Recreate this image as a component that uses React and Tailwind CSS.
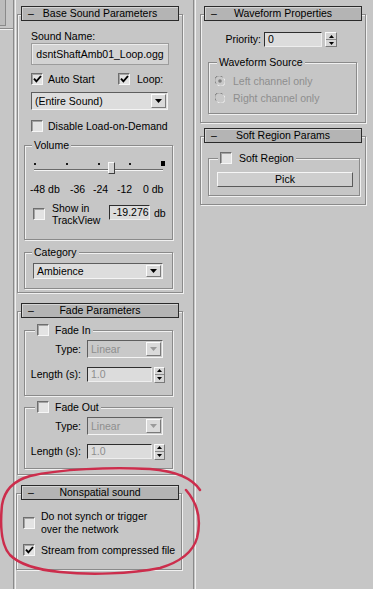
import React from "react";

const BG = "bg-[#c6c6c6]";

function Check({ checked = false, className = "" }) {
  return (
    <div
      className={`flex h-[12px] w-[12px] shrink-0 items-center justify-center border border-t-[#6e6e6e] border-l-[#6e6e6e] border-r-[#f6f6f6] border-b-[#f6f6f6] bg-[#e3e3e3] shadow-[inset_1px_1px_0_#a4a4a4] ${className}`}
    >
      {checked && (
        <svg width="9" height="8" viewBox="0 0 9 8">
          <path d="M1 3.6 L3.4 6.4 L8 1" fill="none" stroke="#000" strokeWidth="1.9" />
        </svg>
      )}
    </div>
  );
}

function Radio({ selected = false }) {
  return (
    <svg width="10" height="10" viewBox="0 0 10 10" className="shrink-0">
      <circle cx="5" cy="5" r="4.5" fill="#c9c9c9" />
      <path d="M1 7.5 A4.5 4.5 0 0 1 7.5 1" fill="none" stroke="#7c7c7c" strokeWidth="1" />
      <path d="M8.9 2.5 A4.5 4.5 0 0 1 2.5 8.9" fill="none" stroke="#f2f2f2" strokeWidth="1" />
      {selected && <circle cx="5" cy="5" r="1.8" fill="#7f7f7f" />}
    </svg>
  );
}

function DownTri({ color = "#000" }) {
  return (
    <svg width="7" height="4" viewBox="0 0 7 4">
      <path d="M0 0 H7 L3.5 4 Z" fill={color} />
    </svg>
  );
}

function Dropdown({ text, disabled = false, className = "" }) {
  return (
    <div
      className={`flex items-stretch border border-t-[#5e5e5e] border-l-[#5e5e5e] border-r-[#f4f4f4] border-b-[#f4f4f4] ${
        disabled ? "bg-[#c9c9c9] text-[#8e8e8e]" : "bg-[#dddddd]"
      } ${className}`}
    >
      <div className="flex flex-1 items-center pl-[3px]">{text}</div>
      <div className="my-[1px] mr-[1px] flex w-[15px] items-center justify-center border border-t-[#fbfbfb] border-l-[#fbfbfb] border-r-[#7a7a7a] border-b-[#7a7a7a] bg-[#dadada]">
        <DownTri color={disabled ? "#9a9a9a" : "#000"} />
      </div>
    </div>
  );
}

function SpinArrows({ className = "" }) {
  return (
    <div
      className={`flex flex-col border border-t-[#fafafa] border-l-[#fafafa] border-r-[#7a7a7a] border-b-[#7a7a7a] bg-[#d6d6d6] ${className}`}
    >
      <div className="flex flex-1 items-center justify-center border-b border-b-[#8a8a8a]">
        <svg width="5" height="3" viewBox="0 0 5 3">
          <path d="M0 3 H5 L2.5 0 Z" fill="#000" />
        </svg>
      </div>
      <div className="flex flex-1 items-center justify-center">
        <svg width="5" height="3" viewBox="0 0 5 3">
          <path d="M0 0 H5 L2.5 3 Z" fill="#000" />
        </svg>
      </div>
    </div>
  );
}

function Field({ value, disabled = false, className = "" }) {
  return (
    <div
      className={`flex items-center border border-t-[#2e2e2e] border-l-[#2e2e2e] border-r-[#eeeeee] border-b-[#eeeeee] bg-[#dcdcdc] pl-[3px] ${
        disabled ? "text-[#8e8e8e]" : "text-black"
      } ${className}`}
    >
      {value}
    </div>
  );
}

function GroupBox({ label, labelClass = "left-[7px]", className = "", children }) {
  return (
    <div
      className={`relative border border-[#8a8a8a] shadow-[inset_1px_1px_0_#f0f0f0,1px_1px_0_#f0f0f0] ${className}`}
    >
      <div className={`absolute -top-[7px] flex h-[12px] items-center px-[2px] ${BG} ${labelClass}`}>
        {label}
      </div>
      {children}
    </div>
  );
}

function Rollout({ title, className = "", headerClass = "", frameClass = "", children }) {
  return (
    <div className={className}>
      <div
        className={`relative z-10 grid h-[15px] w-[158px] grid-cols-[20px_1fr_20px] items-center border border-[#2a2a2a] bg-[#b4b4b4] shadow-[inset_1px_1px_0_#d4d4d4] ${headerClass}`}
      >
        <span className="pl-[6px]">–</span>
        <span className="text-center">{title}</span>
        <span />
      </div>
      <div
        className={`relative -mt-[7px] w-[166px] border border-[#8a8a8a] shadow-[inset_1px_1px_0_#f0f0f0,1px_1px_0_#f0f0f0] ${frameClass}`}
      >
        {children}
      </div>
    </div>
  );
}

function VLine() {
  return <div className="h-full w-[3px] shrink-0 border-l border-r border-l-[#8a8a8a] border-r-[#f0f0f0]" />;
}

function LeftColumn() {
  return (
    <div className="flex w-[177px] shrink-0 flex-col pt-[6px]">
      {/* Base Sound Parameters */}
      <Rollout title="Base Sound Parameters" headerClass="ml-[5px]" frameClass="ml-[1px] h-[279px]">
        <div className="ml-[13px] mt-[15px] flex h-[12px] items-center">Sound Name:</div>
        <div className="ml-[13px] mt-[1px] flex h-[22px] w-[138px] items-center justify-center border border-[#9c9c9c] bg-[#d3d3d3] shadow-[inset_1px_1px_0_#ececec]">
          dsntShaftAmb01_Loop.ogg
        </div>
        <div className="ml-[13px] mt-[8px] flex h-[12px] items-center">
          <div className="flex w-[87px] items-center">
            <Check checked />
            <span className="ml-[5px]">Auto Start</span>
          </div>
          <Check checked />
          <span className="ml-[7px]">Loop:</span>
        </div>
        <Dropdown text="(Entire Sound)" className="ml-[13px] mt-[7px] h-[18px] w-[137px]" />
        <div className="ml-[13px] mt-[10px] flex h-[12px] items-center">
          <Check />
          <span className="ml-[5px]">Disable Load-on-Demand</span>
        </div>
        <GroupBox label="Volume" labelClass="left-[7px]" className="ml-[6px] mt-[13px] h-[95px] w-[149px]">
          <div className="relative ml-[9px] mt-[15px] h-[13px] w-[131px]">
            <div className="flex h-[5px] items-center justify-between">
              <div className="h-[2px] w-[2px] bg-[#1a1a1a]" />
              <div className="h-[2px] w-[2px] bg-[#1a1a1a]" />
              <div className="h-[2px] w-[2px] bg-[#1a1a1a]" />
              <div className="h-[2px] w-[2px] bg-[#1a1a1a]" />
              <div className="h-[5px] w-[4px] bg-[#000]" />
            </div>
            <div className="mr-[2px] mt-[3px] h-[2px] border-t border-b border-t-[#6a6a6a] border-b-[#f4f4f4]" />
            <div className="absolute left-[74px] top-[1px] h-[12px] w-[7px] border border-t-[#fafafa] border-l-[#fafafa] border-r-[#404040] border-b-[#404040] bg-[#d2d2d2]" />
          </div>
          <div className="ml-[5px] mt-[9px] grid h-[12px] grid-cols-[40px_23px_24px_26px_1fr] items-center">
            <span>-48 db</span>
            <span>-36</span>
            <span>-24</span>
            <span>-12</span>
            <span>0 db</span>
          </div>
          <div className="ml-[8px] mt-[7px] flex h-[24px] items-center">
            <Check />
            <div className="ml-[7px] w-[57px] leading-[12px]">
              <div>Show in</div>
              <div>TrackView</div>
            </div>
            <Field value="-19.276" className="h-[15px] w-[41px] self-start mt-[3px]" />
            <span className="ml-[4px] self-start mt-[6px]">db</span>
          </div>
        </GroupBox>
        <GroupBox label="Category" labelClass="left-[7px]" className="ml-[6px] mt-[12px] h-[37px] w-[149px]">
          <Dropdown text="Ambience" className="ml-[8px] mt-[10px] h-[16px] w-[130px]" />
        </GroupBox>
      </Rollout>

      {/* Fade Parameters */}
      <Rollout title="Fade Parameters" className="mt-[10px]" headerClass="ml-[5px]" frameClass="ml-[1px] h-[164px]">
        <GroupBox
          label={
            <>
              <Check />
              <span className="ml-[6px]">Fade In</span>
            </>
          }
          labelClass="left-[10px]"
          className="ml-[6px] mt-[18px] h-[66px] w-[149px]"
        >
          <div className="mt-[9px] flex h-[18px] items-center">
            <span className="w-[56px] text-right">Type:</span>
            <Dropdown text="Linear" disabled className="ml-[6px] h-[18px] w-[76px]" />
          </div>
          <div className="mt-[9px] flex h-[15px] items-center">
            <span className="w-[56px] text-right">Length (s):</span>
            <Field value="1.0" disabled className="ml-[6px] h-[15px] w-[65px]" />
            <SpinArrows className="ml-[2px] h-[16px] w-[11px]" />
          </div>
        </GroupBox>
        <GroupBox
          label={
            <>
              <Check />
              <span className="ml-[6px]">Fade Out</span>
            </>
          }
          labelClass="left-[10px]"
          className="ml-[6px] mt-[11px] h-[62px] w-[149px]"
        >
          <div className="mt-[9px] flex h-[18px] items-center">
            <span className="w-[56px] text-right">Type:</span>
            <Dropdown text="Linear" disabled className="ml-[6px] h-[18px] w-[76px]" />
          </div>
          <div className="mt-[9px] flex h-[15px] items-center">
            <span className="w-[56px] text-right">Length (s):</span>
            <Field value="1.0" disabled className="ml-[6px] h-[15px] w-[65px]" />
            <SpinArrows className="ml-[2px] h-[16px] w-[11px]" />
          </div>
        </GroupBox>
      </Rollout>

      {/* Nonspatial sound */}
      <Rollout title="Nonspatial sound" className="mt-[10px]" headerClass="ml-[5px]" frameClass="h-[77px]">
        <div className="ml-[6px] mt-[16px] flex h-[26px] items-center">
          <Check />
          <div className="ml-[6px] leading-[13px]">
            <div>Do not synch or trigger</div>
            <div>over the network</div>
          </div>
        </div>
        <div className="ml-[6px] mt-[8px] flex h-[12px] items-center">
          <Check checked />
          <span className="ml-[6px]">Stream from compressed file</span>
        </div>
      </Rollout>
    </div>
  );
}

function RightColumn() {
  return (
    <div className="flex flex-1 flex-col pt-[6px]">
      <Rollout title="Waveform Properties" headerClass="ml-[8px]" frameClass="ml-[4px] h-[109px]">
        <div className="mt-[17px] flex h-[15px] items-center">
          <span className="ml-[20px] w-[40px] text-right">Priority:</span>
          <Field value="0" className="ml-[3px] h-[15px] w-[58px]" />
          <SpinArrows className="ml-[3px] h-[15px] w-[12px]" />
        </div>
        <GroupBox label="Waveform Source" labelClass="left-[8px]" className="ml-[7px] mt-[15px] h-[52px] w-[149px]">
          <div className="ml-[6px] mt-[12px] flex h-[12px] items-center text-[#8e8e8e]">
            <Radio selected />
            <span className="ml-[8px]">Left channel only</span>
          </div>
          <div className="ml-[6px] mt-[5px] flex h-[12px] items-center text-[#8e8e8e]">
            <Radio />
            <span className="ml-[8px]">Right channel only</span>
          </div>
        </GroupBox>
      </Rollout>

      <Rollout title="Soft Region Params" className="mt-[5px]" headerClass="ml-[8px]" frameClass="ml-[4px] h-[69px]">
        <GroupBox
          label={
            <>
              <Check />
              <span className="ml-[7px]">Soft Region</span>
            </>
          }
          labelClass="left-[9px]"
          className="ml-[7px] mt-[21px] h-[38px] w-[152px]"
        >
          <div className="ml-[8px] mt-[13px] flex h-[15px] w-[136px] items-center justify-center border border-t-[#f6f6f6] border-l-[#f6f6f6] border-r-[#5a5a5a] border-b-[#5a5a5a] bg-[#cecece]">
            Pick
          </div>
        </GroupBox>
      </Rollout>
    </div>
  );
}

export default function App() {
  return (
    <div
      className={`relative flex h-[589px] w-[373px] overflow-hidden ${BG} font-['Liberation_Sans',Arial,sans-serif] text-[10.5px] leading-none text-black`}
    >
      <div className="flex w-[13px] shrink-0 flex-col">
        <div className="h-[26px] w-[6px] border-b border-r border-[#8a8a8a] bg-[#bcbcbc]" />
        <div className="mt-[2px] h-[2px] border-t border-b border-t-[#8a8a8a] border-b-[#f0f0f0]" />
      </div>
      <VLine />
      <LeftColumn />
      <VLine />
      <RightColumn />
      <svg className="pointer-events-none absolute left-0 top-0" width="373" height="589" viewBox="0 0 373 589">
        <path
          d="M200 490 C192 478, 175 471, 150 469 C110 467, 60 469, 30 476 C12 481, 4 492, 2 505 C0 525, 1 545, 10 555 C20 565, 40 570, 60 572 C90 575, 130 574, 160 568 C180 562, 193 552, 197 538 C201 522, 199 505, 186 490"
          fill="none"
          stroke="#cc2d4c"
          strokeWidth="2.5"
          strokeLinecap="round"
        />
      </svg>
    </div>
  );
}
